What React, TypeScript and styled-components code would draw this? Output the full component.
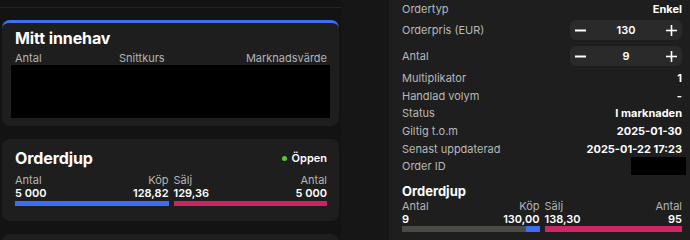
import React from "react";
import styled, { createGlobalStyle } from "styled-components";

const Global = createGlobalStyle`
  html, body { margin: 0; padding: 0; background: #131313; }
  body { font-family: Inter, "Noto Sans", "Liberation Sans", sans-serif; color: #fff; -webkit-font-smoothing: antialiased; }
  * { box-sizing: border-box; }
`;

const Page = styled.div`
  display: flex;
  width: 690px;
  height: 240px;
  overflow: hidden;
`;

const LeftCol = styled.div`
  width: 341px;
  flex: none;
  display: flex;
  flex-direction: column;
  padding-left: 2px;
  padding-right: 2px;
`;

const Divider = styled.div`
  height: 8px;
  margin-left: -2px;
  margin-right: -2px;
  border-bottom: 1px solid #242424;
  margin-bottom: 12px;
  flex: none;
`;

const Card = styled.div<{ $accent?: boolean }>`
  background: #1e1e1e;
  border-radius: 8px;
  border-top: ${(p) => (p.$accent ? "3px solid #3f6ef2" : "none")};
  padding: ${(p) => (p.$accent ? "5px 9px 8px" : "9px 12px 15px 13px")};
  margin-bottom: 13px;
  flex: none;
`;

const CardTitle = styled.div<{ $inset?: boolean }>`
  font-size: 16px;
  font-weight: 700;
  line-height: 20px;
  letter-spacing: -0.1px;
  padding-left: ${(p) => (p.$inset ? "4px" : "0")};
`;

const TitleRow = styled.div`
  display: flex;
  align-items: center;
  justify-content: space-between;
  height: 20px;
`;

const Status = styled.div`
  display: flex;
  align-items: center;
  gap: 5px;
  font-size: 11px;
  font-weight: 600;
`;

const Dot = styled.span`
  width: 5px;
  height: 5px;
  border-radius: 50%;
  background: #4fcf2a;
`;

const HeadGrid = styled.div`
  display: grid;
  grid-template-columns: 1fr 1fr 1fr;
  padding: 0 3px 0 4px;
  margin-top: 4px;
  font-size: 11px;
  color: #b4b4b4;
  line-height: 13px;
  & > :last-child { text-align: right; }
`;

const Blackout = styled.div<{ $w?: number; $h: number; $mr?: number }>`
  background: #000;
  height: ${(p) => p.$h}px;
  width: ${(p) => (p.$w ? `${p.$w}px` : "auto")};
  margin-right: ${(p) => p.$mr ?? 0}px;
`;

const Depth = styled.div<{ $top: number }>`
  display: grid;
  grid-template-columns: 1fr 1fr;
  column-gap: 5px;
  margin-top: ${(p) => p.$top}px;
`;

const DepthSide = styled.div`
  display: flex;
  flex-direction: column;
`;

const DepthLine = styled.div<{ $head?: boolean }>`
  display: flex;
  justify-content: space-between;
  font-size: 11px;
  line-height: 13px;
  color: ${(p) => (p.$head ? "#b4b4b4" : "#fff")};
  font-weight: ${(p) => (p.$head ? 400 : 600)};
`;

const Bar = styled.div<{ $color: string; $h: number; $top: number }>`
  height: ${(p) => p.$h}px;
  margin-top: ${(p) => p.$top}px;
  background: ${(p) => p.$color};
  display: flex;
  justify-content: flex-end;
`;

const BarFill = styled.div<{ $color: string }>`
  background: ${(p) => p.$color};
  height: 100%;
`;

const Gutter = styled.div`
  width: 48px;
  flex: none;
  background: #161616;
`;

const Panel = styled.div`
  flex: 1;
  background: #1e1e1e;
  padding: 0 8px 0 13px;
  display: flex;
  flex-direction: column;
`;

const Row = styled.div<{ $h: number; $mt?: number }>`
  display: flex;
  justify-content: space-between;
  align-items: center;
  height: ${(p) => p.$h}px;
  margin-top: ${(p) => p.$mt ?? 0}px;
  font-size: 11px;
`;

const Label = styled.span`
  color: #b8b8b8;
`;

const Value = styled.span`
  color: #fff;
  font-weight: 700;
`;

const Stepper = styled.div`
  width: 112px;
  height: 20px;
  background: #2a2a2a;
  border-radius: 6px;
  display: flex;
  align-items: center;
  justify-content: space-between;
  padding: 0 5px;
  font-size: 11px;
  font-weight: 600;
`;

const PanelTitle = styled.div`
  font-size: 13px;
  font-weight: 700;
  line-height: 16px;
  margin-top: 8px;
`;

const Minus = () => (
  <svg width="11" height="11" viewBox="0 0 11 11">
    <line x1="0" y1="5.5" x2="11" y2="5.5" stroke="#fff" strokeWidth="2" />
  </svg>
);

const Plus = () => (
  <svg width="11" height="11" viewBox="0 0 11 11">
    <line x1="0" y1="5.5" x2="11" y2="5.5" stroke="#fff" strokeWidth="1.6" />
    <line x1="5.5" y1="0" x2="5.5" y2="11" stroke="#fff" strokeWidth="1.6" />
  </svg>
);

const StepField = ({ value }: { value: string }) => (
  <Stepper>
    <Minus />
    <span>{value}</span>
    <Plus />
  </Stepper>
);

const rows: [string, string][] = [
  ["Multiplikator", "1"],
  ["Handlad volym", "-"],
  ["Status", "I marknaden"],
  ["Giltig t.o.m", "2025-01-30"],
  ["Senast uppdaterad", "2025-01-22 17:23"],
];

export default function App() {
  return (
    <Page>
      <Global />
      <LeftCol>
        <Divider />
        <Card $accent>
          <CardTitle $inset>Mitt innehav</CardTitle>
          <HeadGrid>
            <span>Antal</span>
            <span>Snittkurs</span>
            <span>Marknadsvärde</span>
          </HeadGrid>
          <Blackout $h={53} />
        </Card>
        <Card>
          <TitleRow>
            <CardTitle>Orderdjup</CardTitle>
            <Status>
              <Dot />
              Öppen
            </Status>
          </TitleRow>
          <Depth $top={6}>
            <DepthSide>
              <DepthLine $head>
                <span>Antal</span>
                <span>Köp</span>
              </DepthLine>
              <DepthLine>
                <span>5 000</span>
                <span>128,82</span>
              </DepthLine>
              <Bar $color="#3d6df2" $h={5} $top={1} />
            </DepthSide>
            <DepthSide>
              <DepthLine $head>
                <span>Sälj</span>
                <span>Antal</span>
              </DepthLine>
              <DepthLine>
                <span>129,36</span>
                <span>5 000</span>
              </DepthLine>
              <Bar $color="#cb2463" $h={5} $top={1} />
            </DepthSide>
          </Depth>
        </Card>
        <Card>
          <CardTitle>&nbsp;</CardTitle>
        </Card>
      </LeftCol>
      <Gutter />
      <Panel>
        <Row $h={17}>
          <Label>Ordertyp</Label>
          <Value>Enkel</Value>
        </Row>
        <Row $h={20} $mt={3}>
          <Label>Orderpris (EUR)</Label>
          <StepField value="130" />
        </Row>
        <Row $h={20} $mt={6}>
          <Label>Antal</Label>
          <StepField value="9" />
        </Row>
        <Row $h={17.6} $mt={3.5}>
          <Label>{rows[0][0]}</Label>
          <Value>{rows[0][1]}</Value>
        </Row>
        {rows.slice(1).map(([l, v]) => (
          <Row $h={17.6} key={l}>
            <Label>{l}</Label>
            <Value>{v}</Value>
          </Row>
        ))}
        <Row $h={17.6}>
          <Label>Order ID</Label>
          <Blackout $w={55} $h={18} $mr={-4} />
        </Row>
        <PanelTitle>Orderdjup</PanelTitle>
        <Depth $top={1}>
          <DepthSide>
            <DepthLine $head>
              <span>Antal</span>
              <span>Köp</span>
            </DepthLine>
            <DepthLine>
              <span>9</span>
              <span>130,00</span>
            </DepthLine>
            <Bar $color="#4b4b47" $h={6} $top={0}>
              <BarFill $color="#3d6df2" style={{ width: "10%" }} />
            </Bar>
          </DepthSide>
          <DepthSide>
            <DepthLine $head>
              <span>Sälj</span>
              <span>Antal</span>
            </DepthLine>
            <DepthLine>
              <span>138,30</span>
              <span>95</span>
            </DepthLine>
            <Bar $color="#cf2566" $h={6} $top={0} />
          </DepthSide>
        </Depth>
      </Panel>
    </Page>
  );
}
